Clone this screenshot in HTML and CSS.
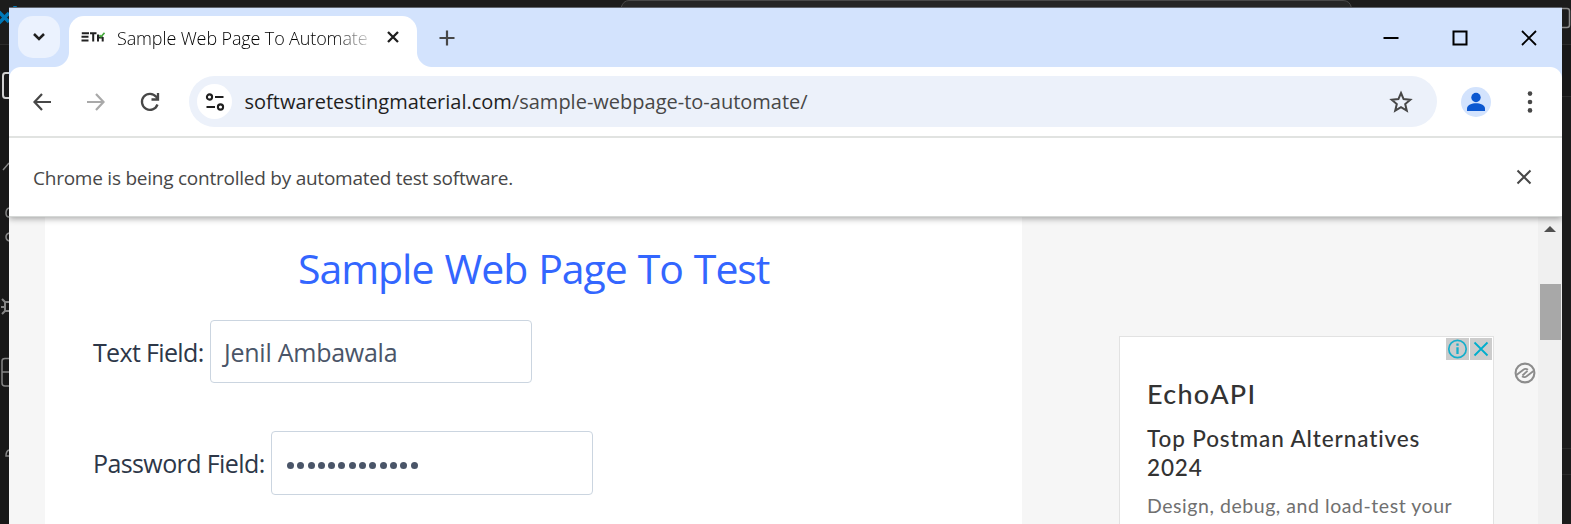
FILE: index.html
```html
<!DOCTYPE html>
<html lang="en">
<head>
<meta charset="utf-8">
<title>Sample Web Page To Automate</title>
<link rel="stylesheet" href="styles.css">
</head>
<body>
<div class="desktop">
  <svg class="editor" width="1571" height="524" viewBox="0 0 1571 524" fill="none">
    <path d="M0 44.5H9M1562 44.5H1571M1562 96.5H1571M1562 448.5H1571M1562 474.5H1571" stroke="#2b2b2b"/>
    <path d="M0 45H9V524H0zM1562 45H1571V96H1562z" fill="#181818"/>
    <path d="M621 8Q623 .5 629 .5H1343Q1350 .5 1351.500 8" fill="#262626" stroke="#4a4a4a"/>
    <path d="M-1 12L9 22M-1 23L9 13M15 6V8" stroke="#0078b8" stroke-width="3.500"/>
    <path d="M9 73H5.500Q3 73 3 76V95Q3 98 5.500 98H9" stroke="#d0d0d0" stroke-width="2"/>
    <path d="M3 170L9 163M9 208Q6 209 6 213T9 217M9 233Q6 234 6 237T9 241M9 450Q6 451 6 456H9" stroke="#858585" stroke-width="1.500"/>
    <path d="M9 358.500H5Q2 358.500 2 361V383Q2 386 5 386H9M2 372H9" stroke="#858585" stroke-width="1.500"/>
    <path d="M2 299L5 302H9M1 307H5M2 314L5 311H9M5 302V311" stroke="#858585" stroke-width="2"/>
    <path d="M1562 8.500H1567Q1569.500 8.500 1569.500 11V25Q1569.500 27.500 1567 27.500H1562" stroke="#8a8a8a" stroke-width="1.500"/>
  </svg>
  <div class="window">
    <div class="tabstrip">
      <div class="tabsearch">
        <svg width="14" height="10" viewBox="0 0 14 10"><path d="M2 2L7 7L12 2" fill="none" stroke="#1f1f1f" stroke-width="2.500"/></svg>
      </div>
      <div class="tab">
        <svg class="favicon" width="24" height="10" viewBox="0 0 24 10" fill="none" stroke="#222" stroke-width="2">
          <path d="M8 1.200H.8M7.500 4.800H.5M7.500 8.400H.5M9 1.200H15.500M12.200 1V9.500M17 9.500V2.500M17 5.500H22M21.700 5V9.500"/>
          <path d="M18.500 3L20 4.700L23.500 .8" stroke="#46a83c" stroke-width="1.600"/>
        </svg>
        <span class="tab-title">Sample Web Page To Automate</span>
        <svg class="tab-close" width="14" height="14" viewBox="0 0 14 14"><path d="M2 2L12 12M12 2L2 12" stroke="#1f1f1f" stroke-width="2.300"/></svg>
      </div>
      <svg class="newtab" width="16" height="16" viewBox="0 0 16 16"><path d="M8 .5V15.500M.5 8H15.500" stroke="#474747" stroke-width="2.200"/></svg>
      <div class="controls">
        <svg width="16" height="16" viewBox="0 0 16 16"><path d="M.5 8H15.500" stroke="#000" stroke-width="2"/></svg>
        <svg width="16" height="16" viewBox="0 0 16 16"><path d="M1.500 1.500H14.500V14.500H1.500z" fill="none" stroke="#000" stroke-width="2"/></svg>
        <svg width="16" height="16" viewBox="0 0 16 16"><path d="M1 1L15 15M15 1L1 15" stroke="#000" stroke-width="1.800"/></svg>
      </div>
    </div>
    <div class="toolbar">
      <svg class="nav" width="20" height="20" viewBox="0 0 20 20" fill="none" stroke="#474747" stroke-width="2.200"><path d="M19 10H3M10 2L2.500 10L10 18"/></svg>
      <svg class="nav" width="20" height="20" viewBox="0 0 20 20" fill="none" stroke="#a9a9a9" stroke-width="2.200"><path d="M1 10H17M10 2L17.500 10L10 18"/></svg>
      <svg class="nav" width="20" height="20" viewBox="0 0 20 20" fill="none" stroke="#474747" stroke-width="2.300"><path d="M17.500 12.500A8 8 0 1 1 16.200 4.800L18 7M18 1V7.500H11.500"/></svg>
      <div class="omnibox">
        <div class="siteinfo">
          <svg width="20" height="18" viewBox="0 0 20 18" fill="none" stroke="#1f1f1f" stroke-width="2.100"><circle cx="4.500" cy="4" r="2.600"/><circle cx="15.500" cy="14" r="2.600"/><path d="M10 4H18.500M1.500 14H10"/></svg>
        </div>
        <span class="url">softwaretestingmaterial.com<span class="path">/sample-webpage-to-automate/</span></span>
        <svg class="star" width="24" height="24" viewBox="0 0 24 24" fill="none" stroke="#474747" stroke-width="2"><path d="M12 3L14.600 9.100L21.300 9.700L16.200 14.100L17.800 20.700L12 17.200L6.200 20.700L7.800 14.100L2.700 9.700L9.400 9.100z"/></svg>
      </div>
      <svg class="avatar" width="30" height="30" viewBox="0 0 30 30"><circle cx="15" cy="15" r="15" fill="#d3e3fd"/><circle cx="15" cy="10.500" r="4.700" fill="#0b57d0"/><path d="M6 24V21.500C6 18 11 16.300 15 16.300S24 18 24 21.500V24z" fill="#0b57d0"/></svg>
      <svg class="menu" width="6" height="22" viewBox="0 0 6 22" fill="#474747"><circle cx="3" cy="2.600" r="2.300"/><circle cx="3" cy="11" r="2.300"/><circle cx="3" cy="19.400" r="2.300"/></svg>
    </div>
    <div class="infobar">
      <span class="notice">Chrome is being controlled by automated test software.</span>
      <svg width="16" height="16" viewBox="0 0 16 16"><path d="M1.500 1.500L14.500 14.500M14.500 1.500L1.500 14.500" stroke="#474747" stroke-width="2"/></svg>
    </div>
    <div class="page">
      <main class="article">
        <h1>Sample Web Page To Test</h1>
        <div class="field"><label class="label-text">Text Field:</label><div class="input"><span class="value">Jenil Ambawala</span></div></div>
        <div class="field"><label class="label-password">Password Field:</label><div class="input password"><i></i><i></i><i></i><i></i><i></i><i></i><i></i><i></i><i></i><i></i><i></i><i></i><i></i></div></div>
      </main>
      <aside class="side">
        <div class="ad">
          <div class="adchoices">
            <svg width="23" height="22" viewBox="0 0 23 22"><path d="M0 0H23V22H0z" fill="#ccc"/><circle cx="11.500" cy="11" r="8.700" fill="none" stroke="#16aecb" stroke-width="1.700"/><path d="M11.500 9.300V16M11.500 5.500V7.700" stroke="#16aecb" stroke-width="2.300"/></svg>
            <svg width="22" height="22" viewBox="0 0 22 22"><path d="M0 0H22V22H0z" fill="#ccc"/><path d="M4.500 4.500L17.500 17.500M17.500 4.500L4.500 17.500" stroke="#00aecd" stroke-width="1.800"/></svg>
          </div>
          <div class="brand">EchoAPI</div>
          <div class="headline">Top Postman Alternatives<br>2024</div>
          <div class="desc">Design, debug, and load-test your</div>
        </div>
        <svg class="badge" width="22" height="22" viewBox="0 0 22 22" fill="none" stroke="#8c8c8c"><circle cx="11" cy="11" r="9.400" stroke-width="2.100"/><path d="M2.500 13L9 8Q11.500 6 14 7.800M19.500 9L13 14Q10.500 16 8 14.200M8.500 13.500L13.500 8.800" stroke-width="1.800"/></svg>
      </aside>
      <div class="scrollbar">
        <svg width="12" height="6" viewBox="0 0 12 6"><path d="M0 6L6 0L12 6z" fill="#505050"/></svg>
        <div class="thumb"></div>
      </div>
    </div>
  </div>
</div>
</body>
</html>
```
FILE: styles.css
```css
* { box-sizing: border-box; }
body { margin: 0; font-family: "Open Sans", "Noto Sans", sans-serif; }
svg { display: block; flex: none; }
.desktop { position: relative; width: 1571px; height: 524px; padding: 7px 9px 0; background: #1c1c1c; overflow: hidden; }
.editor { position: absolute; left: 0; top: 0; }
.window { position: relative; height: 517px; border-top: 1px solid #60656e; background: #fff; display: flex; flex-direction: column; }

.tabstrip { height: 59px; flex: none; background: #d3e3fd; display: flex; padding-top: 8px; }
.tabsearch { width: 42px; height: 42px; margin-left: 9px; border-radius: 15px; background: #ebf2fe; display: flex; align-items: center; justify-content: center; }
.tab { position: relative; width: 348px; height: 51px; margin-left: 9px; background: #fff; border-radius: 15px 15px 0 0; display: flex; padding-left: 12px; }
.tab::before, .tab::after { content: ""; position: absolute; bottom: 0; width: 15px; height: 15px; }
.tab::before { left: -15px; background: radial-gradient(circle at 0 0, transparent 14.5px, #fff 15.5px); }
.tab::after { right: -15px; background: radial-gradient(circle at 100% 0, transparent 14.5px, #fff 15.5px); }
.favicon { margin-top: 16px; }
.tab-title { width: 256px; margin-left: 12px; white-space: nowrap; font-size: 18px; font-weight: 300; letter-spacing: -0.13px; line-height: 45px; color: #000; -webkit-mask-image: linear-gradient(90deg, #000 215px, transparent 260px); mask-image: linear-gradient(90deg, #000 215px, transparent 260px); }
.tab-close { margin: 14px 0 0 13px; }
.newtab { margin: 14px 0 0 22px; }
.controls { display: flex; gap: 53px; margin: 14px 25px 0 auto; }

.toolbar { position: relative; height: 71px; flex: none; background: #fff; border-bottom: 2px solid #e1e3e1; display: flex; align-items: center; padding-left: 23px; }
.toolbar::before, .toolbar::after { content: ""; position: absolute; top: 0; width: 12px; height: 12px; }
.toolbar::before { left: 0; background: radial-gradient(circle at 100% 100%, transparent 11.5px, #d3e3fd 12.5px); }
.toolbar::after { right: 0; background: radial-gradient(circle at 0 100%, transparent 11.5px, #d3e3fd 12.5px); }
.nav { margin-right: 34px; }
.omnibox { width: 1248px; height: 51px; margin-left: -5px; border-radius: 26px; background: #ecf1fa; display: flex; align-items: center; padding-left: 8px; }
.siteinfo { width: 35px; height: 35px; border-radius: 50%; background: #fff; display: flex; align-items: center; justify-content: center; }
.url { margin-left: 12.5px; font-size: 20px; line-height: 51px; color: #1f1f1f; white-space: nowrap; }
.path { color: #474747; }
.star { margin: 0 24px 0 auto; }
.avatar { margin-left: 24px; }
.menu { margin-left: 36px; }

.infobar { position: relative; z-index: 1; height: 79px; flex: none; background: #fff; border-bottom: 1px solid #d5d8d6; box-shadow: 0 2px 6px rgba(0, 0, 0, .32); clip-path: inset(0 0 -10px 0); display: flex; align-items: center; justify-content: space-between; padding: 0 30px 0 24px; }
.notice { font-size: 19px; line-height: 78px; letter-spacing: -0.24px; color: #474747; white-space: nowrap; padding-top: 1px; }

.page { flex: 1; display: flex; background: #f6f6f6; padding-left: 36px; min-height: 0; }
.article { width: 977px; background: #fff; padding-left: 48px; flex: none; }
h1 { margin: 0; padding: 21px 0 0 205px; font-size: 41px; font-weight: 400; letter-spacing: -1.05px; word-spacing: 1.4px; line-height: 60px; height: 103px; color: #36f; white-space: nowrap; }
.field { display: flex; height: 111px; font-size: 25px; line-height: 64px; color: #2d3748; white-space: nowrap; }
.input { width: 322px; height: 63px; border: 1px solid #cbd5e0; border-radius: 4px; background: #fff; padding-left: 13px; line-height: 63px; letter-spacing: -0.25px; color: #4a5568; }
.label-text { width: 117px; letter-spacing: -0.65px; }
.label-password { width: 178px; letter-spacing: -0.6px; }
.password { display: flex; align-items: center; gap: 3.3px; padding: 4px 0 0 15px; height: 64px; }
.password i { width: 7px; height: 7px; border-radius: 50%; background: #4a5568; }

.side { display: flex; width: 516px; flex: none; padding: 119px 0 0 97px; }
.ad { position: relative; width: 375px; height: 230px; flex: none; border: 1px solid #e2e2e2; background: #fff; padding: 37px 0 0 27px; font-family: Lato, sans-serif; color: #333; white-space: nowrap; }
.adchoices { position: absolute; top: 1px; right: 1px; display: flex; gap: 1px; }
.brand { font-size: 27px; line-height: 40px; letter-spacing: 1.3px; font-weight: 500; }
.headline { margin-top: 10px; font-size: 22.5px; line-height: 29px; letter-spacing: .88px; font-weight: 500; }
.desc { margin-top: 10px; font-size: 19.5px; line-height: 28px; letter-spacing: .55px; color: #707070; }
.badge { margin: 26px 0 0 20px; }
.scrollbar { width: 24px; background: #f0f0f0; }
.scrollbar svg { margin: 9px 0 0 6px; }
.thumb { width: 21px; height: 56px; margin: 52px 0 0 2px; background: #a8a8a8; }
```
